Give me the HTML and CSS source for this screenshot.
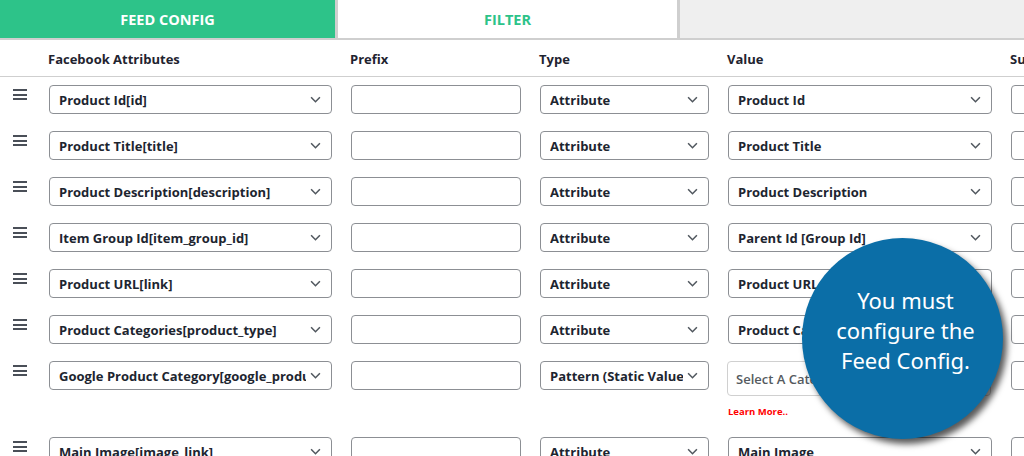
FILE: index.html
```html
<!DOCTYPE html>
<html>
<head>
<meta charset="utf-8">
<link rel="stylesheet" href="styles.css">
</head>
<body>
<div class="page">
  <div class="tabs">
    <div class="tab tab-active">FEED CONFIG</div>
    <div class="tab tab-filter">FILTER</div>
    <div class="tab-rest"></div>
  </div>
  <div class="table">
    <div class="row head">
      <div class="c-drag"></div>
      <div class="c-attr">Facebook Attributes</div>
      <div class="c-prefix">Prefix</div>
      <div class="c-type">Type</div>
      <div class="c-value">Value</div>
      <div class="c-suffix">Suffix</div>
    </div>

    <div class="row">
      <div class="c-drag"><span class="burger"><i></i><i></i><i></i></span></div>
      <div class="c-attr"><div class="sel sel-attr"><span class="txt">Product Id[id]</span><svg class="chev" viewBox="0 0 10 6"><path d="M1 1l4 4 4-4"/></svg></div></div>
      <div class="c-prefix"><div class="inp"></div></div>
      <div class="c-type"><div class="sel sel-type"><span class="txt">Attribute</span><svg class="chev" viewBox="0 0 10 6"><path d="M1 1l4 4 4-4"/></svg></div></div>
      <div class="c-value"><div class="sel sel-value"><span class="txt">Product Id</span><svg class="chev" viewBox="0 0 10 6"><path d="M1 1l4 4 4-4"/></svg></div></div>
      <div class="c-suffix"><div class="inp"></div></div>
    </div>

    <div class="row">
      <div class="c-drag"><span class="burger"><i></i><i></i><i></i></span></div>
      <div class="c-attr"><div class="sel sel-attr"><span class="txt">Product Title[title]</span><svg class="chev" viewBox="0 0 10 6"><path d="M1 1l4 4 4-4"/></svg></div></div>
      <div class="c-prefix"><div class="inp"></div></div>
      <div class="c-type"><div class="sel sel-type"><span class="txt">Attribute</span><svg class="chev" viewBox="0 0 10 6"><path d="M1 1l4 4 4-4"/></svg></div></div>
      <div class="c-value"><div class="sel sel-value"><span class="txt">Product Title</span><svg class="chev" viewBox="0 0 10 6"><path d="M1 1l4 4 4-4"/></svg></div></div>
      <div class="c-suffix"><div class="inp"></div></div>
    </div>

    <div class="row">
      <div class="c-drag"><span class="burger"><i></i><i></i><i></i></span></div>
      <div class="c-attr"><div class="sel sel-attr"><span class="txt">Product Description[description]</span><svg class="chev" viewBox="0 0 10 6"><path d="M1 1l4 4 4-4"/></svg></div></div>
      <div class="c-prefix"><div class="inp"></div></div>
      <div class="c-type"><div class="sel sel-type"><span class="txt">Attribute</span><svg class="chev" viewBox="0 0 10 6"><path d="M1 1l4 4 4-4"/></svg></div></div>
      <div class="c-value"><div class="sel sel-value"><span class="txt">Product Description</span><svg class="chev" viewBox="0 0 10 6"><path d="M1 1l4 4 4-4"/></svg></div></div>
      <div class="c-suffix"><div class="inp"></div></div>
    </div>

    <div class="row">
      <div class="c-drag"><span class="burger"><i></i><i></i><i></i></span></div>
      <div class="c-attr"><div class="sel sel-attr"><span class="txt">Item Group Id[item_group_id]</span><svg class="chev" viewBox="0 0 10 6"><path d="M1 1l4 4 4-4"/></svg></div></div>
      <div class="c-prefix"><div class="inp"></div></div>
      <div class="c-type"><div class="sel sel-type"><span class="txt">Attribute</span><svg class="chev" viewBox="0 0 10 6"><path d="M1 1l4 4 4-4"/></svg></div></div>
      <div class="c-value"><div class="sel sel-value"><span class="txt">Parent Id [Group Id]</span><svg class="chev" viewBox="0 0 10 6"><path d="M1 1l4 4 4-4"/></svg></div></div>
      <div class="c-suffix"><div class="inp"></div></div>
    </div>

    <div class="row">
      <div class="c-drag"><span class="burger"><i></i><i></i><i></i></span></div>
      <div class="c-attr"><div class="sel sel-attr"><span class="txt">Product URL[link]</span><svg class="chev" viewBox="0 0 10 6"><path d="M1 1l4 4 4-4"/></svg></div></div>
      <div class="c-prefix"><div class="inp"></div></div>
      <div class="c-type"><div class="sel sel-type"><span class="txt">Attribute</span><svg class="chev" viewBox="0 0 10 6"><path d="M1 1l4 4 4-4"/></svg></div></div>
      <div class="c-value"><div class="sel sel-value"><span class="txt">Product URL</span><svg class="chev" viewBox="0 0 10 6"><path d="M1 1l4 4 4-4"/></svg></div></div>
      <div class="c-suffix"><div class="inp"></div></div>
    </div>

    <div class="row">
      <div class="c-drag"><span class="burger"><i></i><i></i><i></i></span></div>
      <div class="c-attr"><div class="sel sel-attr"><span class="txt">Product Categories[product_type]</span><svg class="chev" viewBox="0 0 10 6"><path d="M1 1l4 4 4-4"/></svg></div></div>
      <div class="c-prefix"><div class="inp"></div></div>
      <div class="c-type"><div class="sel sel-type"><span class="txt">Attribute</span><svg class="chev" viewBox="0 0 10 6"><path d="M1 1l4 4 4-4"/></svg></div></div>
      <div class="c-value"><div class="sel sel-value"><span class="txt">Product Categories</span><svg class="chev" viewBox="0 0 10 6"><path d="M1 1l4 4 4-4"/></svg></div></div>
      <div class="c-suffix"><div class="inp"></div></div>
    </div>

    <div class="row row-tall">
      <div class="c-drag"><span class="burger"><i></i><i></i><i></i></span></div>
      <div class="c-attr"><div class="sel sel-attr"><span class="txt">Google Product Category[google_product_category]</span><svg class="chev" viewBox="0 0 10 6"><path d="M1 1l4 4 4-4"/></svg></div></div>
      <div class="c-prefix"><div class="inp"></div></div>
      <div class="c-type"><div class="sel sel-type"><span class="txt">Pattern (Static Value)</span><svg class="chev" viewBox="0 0 10 6"><path d="M1 1l4 4 4-4"/></svg></div></div>
      <div class="c-value">
        <div class="cat">Select A Category</div>
        <a class="learn">Learn More..</a>
      </div>
      <div class="c-suffix"><div class="inp"></div></div>
    </div>

    <div class="row">
      <div class="c-drag"><span class="burger"><i></i><i></i><i></i></span></div>
      <div class="c-attr"><div class="sel sel-attr"><span class="txt">Main Image[image_link]</span><svg class="chev" viewBox="0 0 10 6"><path d="M1 1l4 4 4-4"/></svg></div></div>
      <div class="c-prefix"><div class="inp"></div></div>
      <div class="c-type"><div class="sel sel-type"><span class="txt">Attribute</span><svg class="chev" viewBox="0 0 10 6"><path d="M1 1l4 4 4-4"/></svg></div></div>
      <div class="c-value"><div class="sel sel-value"><span class="txt">Main Image</span><svg class="chev" viewBox="0 0 10 6"><path d="M1 1l4 4 4-4"/></svg></div></div>
      <div class="c-suffix"><div class="inp"></div></div>
    </div>
  </div>

  <div class="bubble">
    <div class="bubble-text">You must<br>configure the<br>Feed Config.</div>
  </div>
</div>
</body>
</html>
```

FILE: styles.css
```css
html, body {
  margin: 0;
  padding: 0;
  background: #fff;
  overflow: hidden;
}
body {
  width: 1024px;
  height: 456px;
  font-family: "Open Sans", "Noto Sans", "Liberation Sans", sans-serif;
  color: #1f2430;
}
.page {
  position: relative;
  width: 1024px;
  height: 456px;
  overflow: hidden;
}
.tabs {
  display: flex;
  height: 38px;
  border-bottom: 2px solid #cfcfcf;
}
.tab {
  display: flex;
  align-items: center;
  justify-content: center;
  font-weight: 700;
  font-size: 14.5px;
  letter-spacing: 0;
}
.tab-active {
  width: 335px;
  background: #2dc389;
  color: #fff;
  border-right: 3px solid #cfcfcf;
}
.tab-filter {
  width: 339px;
  background: #fff;
  color: #2dc389;
  border-right: 3px solid #cfcfcf;
}
.tab-rest {
  flex: 1;
  background: #efefef;
}
.table {
  width: 1300px;
}
.row {
  display: flex;
  align-items: flex-start;
  height: 46px;
  padding-top: 8px;
  box-sizing: border-box;
  font-size: 13px;
  font-weight: 700;
}
.row.head {
  height: 37px;
  padding-top: 1px;
  align-items: center;
  border-bottom: 1px solid #cfcfcf;
  font-size: 13px;
}
.row-tall {
  height: 76px;
}
.c-drag {
  width: 48px;
  flex: none;
}
.c-attr { width: 302px; flex: none; }
.c-prefix { width: 189px; flex: none; }
.c-type { width: 188px; flex: none; }
.c-value { width: 283px; flex: none; }
.c-suffix { width: 200px; flex: none; }

.burger {
  display: flex;
  flex-direction: column;
  gap: 2.5px;
  width: 14px;
  margin: 4px 0 0 13px;
}
.burger i {
  display: block;
  height: 2px;
  background: #4a4f58;
}
.sel, .inp {
  box-sizing: border-box;
  height: 29px;
  border: 1px solid #8c8f94;
  border-radius: 4px;
  background: #fff;
}
.sel {
  display: flex;
  align-items: center;
  padding: 0 10px 0 9px;
}
.sel .txt {
  flex: 1;
  min-width: 0;
  white-space: nowrap;
  overflow: hidden;
  color: #1d2530;
}
.chev {
  flex: none;
  width: 11px;
  height: 7px;
  margin-left: 4px;
  fill: none;
  stroke: #50575e;
  stroke-width: 1.4;
}
.sel-attr { width: 283px; margin-left: 1px; }
.sel-type { width: 169px; margin-left: 1px; }
.sel-value { width: 264px; margin-left: 1px; }
.inp { width: 170px; margin-left: 1px; }
.c-suffix .inp { width: 170px; }

.cat {
  box-sizing: border-box;
  width: 264px;
  height: 35px;
  border: 1px solid #d0d0d0;
  border-radius: 4px;
  display: flex;
  align-items: center;
  padding-left: 8px;
  color: #555a60;
  font-weight: 600;
  font-size: 13px;
}
.learn {
  display: block;
  color: #ff0000;
  font-size: 9.5px;
  font-weight: 700;
  margin: 9px 0 0 1px;
}

.bubble {
  position: absolute;
  left: 802px;
  top: 238px;
  width: 201px;
  height: 201px;
  border-radius: 50%;
  background: #0b6ea7;
  box-shadow: 4px 5px 6px rgba(0, 0, 0, 0.65);
  display: flex;
  align-items: center;
  justify-content: center;
}
.bubble-text {
  color: #fff;
  font-family: "Noto Sans", "Open Sans", sans-serif;
  font-size: 22px;
  line-height: 30px;
  text-align: center;
  margin: -17px 0 0 6px;
}
```
